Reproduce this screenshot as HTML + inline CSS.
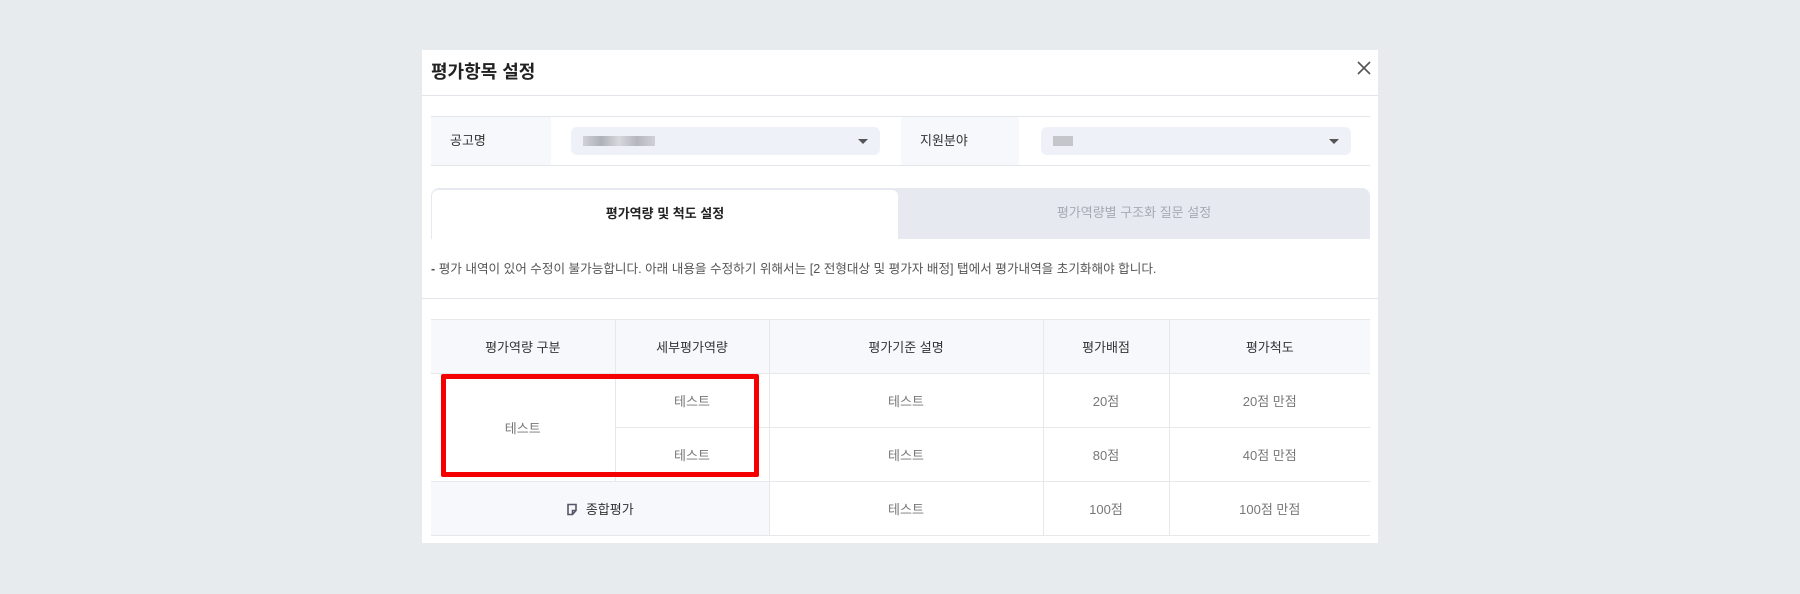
<!DOCTYPE html>
<html><head><meta charset="utf-8"><style>
*{box-sizing:border-box;margin:0;padding:0}
body{width:1800px;height:594px;background:#e8ebee;font-family:"Liberation Sans","Noto Sans CJK KR",sans-serif;position:relative;overflow:hidden}
.m{position:absolute;left:422px;top:50px;width:956px;height:493px;background:#fff}
.ab{position:absolute}
.t{left:9px;top:0;height:45px;line-height:45px;font-size:18px;font-weight:bold;color:#222}
.hl{left:0;top:45px;width:956px;height:1px;background:#e3e6ea}
.x{left:935px;top:11px}
.fr{left:9px;top:66px;width:939px;height:50px;border-top:1px solid #e3e6ea;border-bottom:1px solid #e3e6ea}
.lab{position:absolute;top:0;height:48px;line-height:48px;background:#f7f8fb;font-size:13px;color:#333;padding-left:19px}
.sel{position:absolute;top:10px;height:28px;background:#eef1f8;border-radius:6px}
.blur{position:absolute;top:9px;height:10px;background:#c8cad0}
.arr{position:absolute;right:12px;top:12px;width:0;height:0;border-left:5px solid transparent;border-right:5px solid transparent;border-top:5px solid #555}
.tabs{left:9px;top:138px;width:939px;height:51px;background:#e6e9ef;border-radius:8px 8px 0 0}
.tab1{position:absolute;left:1px;top:2px;width:466px;height:49px;background:#fff;border-radius:6px 6px 0 0;text-align:center;line-height:47px;font-size:13px;color:#222;font-weight:bold}
.tab2{position:absolute;left:467px;top:0;width:472px;height:51px;text-align:center;line-height:49px;font-size:13px;color:#a4a9b3}
.n{left:9px;top:208px;font-size:12.6px;color:#555}
.hl2{left:0;top:248px;width:956px;height:1px;background:#e3e6ea}
table{position:absolute;left:9px;top:269px;width:939px;border-collapse:collapse;font-size:13px}
td{border:1px solid #e6e8ec;text-align:center;color:#777;height:54px}
td:first-child{border-left:none}td:last-child{border-right:none}
.h td{background:#f7f8fb;color:#333;height:54px}
.g{background:#f7f8fb;color:#333!important}
.red{position:absolute;left:19px;top:324px;width:318px;height:103px;border:5px solid #f40000;border-radius:2px}
</style></head><body>
<div class="m">
<div class="ab t">평가항목 설정</div>
<svg class="ab x" width="14" height="14" viewBox="0 0 14 14"><path d="M1 1L13 13M13 1L1 13" stroke="#555" stroke-width="1.6"/></svg>
<div class="ab hl"></div>
<div class="ab fr">
<div class="lab" style="left:0;width:120px">공고명</div>
<div class="sel" style="left:140px;width:309px"><div class="blur" style="left:12px;width:72px;background:linear-gradient(90deg,#d0d2d8,#aeb1b8,#d6d8dd,#b4b7be,#cfd1d6)"></div><div class="arr"></div></div>
<div class="lab" style="left:470px;width:118px">지원분야</div>
<div class="sel" style="left:610px;width:310px"><div class="blur" style="left:12px;width:20px;background:#c4c6cc"></div><div class="arr"></div></div>
</div>
<div class="ab tabs"><div class="tab1">평가역량 및 척도 설정</div><div class="tab2">평가역량별 구조화 질문 설정</div></div>
<div class="ab n"><b>-</b> 평가 내역이 있어 수정이 불가능합니다. 아래 내용을 수정하기 위해서는 [2 전형대상 및 평가자 배정] 탭에서 평가내역을 초기화해야 합니다.</div>
<div class="ab hl2"></div>
<table>
<colgroup><col style="width:184px"><col style="width:154px"><col style="width:274px"><col style="width:126px"><col style="width:201px"></colgroup>
<tr class="h"><td>평가역량 구분</td><td>세부평가역량</td><td>평가기준 설명</td><td>평가배점</td><td>평가척도</td></tr>
<tr><td rowspan="2">테스트</td><td>테스트</td><td>테스트</td><td>20점</td><td>20점 만점</td></tr>
<tr><td>테스트</td><td>테스트</td><td>80점</td><td>40점 만점</td></tr>
<tr><td colspan="2" class="g"><svg width="12" height="13" viewBox="0 0 12 13" style="vertical-align:-2px;margin-right:8px"><path d="M2 1.5h8v6l-3.5 4H2z M6.5 11.5v-4h3.5" fill="none" stroke="#556" stroke-width="1.6"/></svg>종합평가</td><td>테스트</td><td>100점</td><td>100점 만점</td></tr>
</table>
<div class="red"></div>
</div>
</body></html>
